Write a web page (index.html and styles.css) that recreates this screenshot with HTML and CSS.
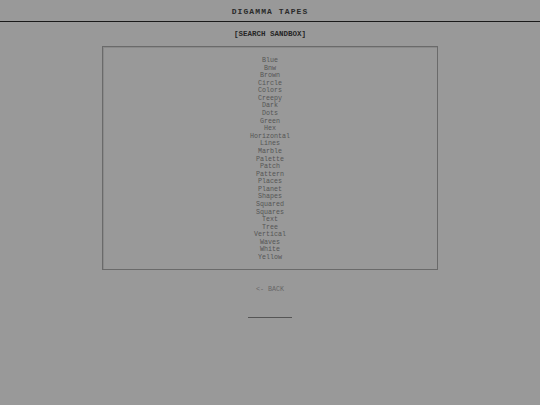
FILE: index.html
```html
<!DOCTYPE html>
<html>
<head>
<meta charset="utf-8">
<link rel="stylesheet" href="styles.css">
</head>
<body>
<header class="topbar"><span class="brand">DIGAMMA TAPES</span></header>
<main class="main">
  <h1 class="title">[SEARCH SANDBOX]</h1>
  <div class="box">
    <ul class="list">
      <li>Blue</li><li>Bnw</li><li>Brown</li><li>Circle</li><li>Colors</li><li>Creepy</li><li>Dark</li><li>Dots</li><li>Green</li><li>Hex</li><li>Horizontal</li><li>Lines</li><li>Marble</li><li>Palette</li><li>Patch</li><li>Pattern</li><li>Places</li><li>Planet</li><li>Shapes</li><li>Squared</li><li>Squares</li><li>Text</li><li>Tree</li><li>Vertical</li><li>Waves</li><li>White</li><li>Yellow</li>
    </ul>
  </div>
  <a class="back" href="#">&lt;- BACK</a>
  <div class="rule"></div>
</main>
</body>
</html>
```
FILE: styles.css
```css
html, body {
  margin: 0;
  padding: 0;
  background: #999999;
  font-family: "Nimbus Mono PS", "Nimbus Mono L", "Courier", "Liberation Mono", monospace;
}
.topbar {
  height: 21px;
  border-bottom: 1px solid #1a1a1a;
  display: flex;
  align-items: center;
  justify-content: center;
}
.brand {
  font-size: 8px;
  font-weight: bold;
  letter-spacing: 1.1px;
  color: #2a2a2a;
  padding-top: 1px;
}
.main {
  display: flex;
  flex-direction: column;
  align-items: center;
}
.title {
  margin: 8px 0 0;
  height: 16px;
  line-height: 8px;
  font-size: 7.5px;
  font-weight: bold;
  color: #262626;
}
.box {
  width: 334px;
  height: 222px;
  border: 1px solid #6a6a6a;
  box-shadow: inset 1px 1px 0 #8a8a8a;
  box-sizing: content-box;
}
.list {
  list-style: none;
  margin: 0;
  padding: 10px 0 0;
  text-align: center;
  font-size: 6.67px;
  line-height: 7.58px;
  color: #555555;
}
.back {
  margin-top: 15px;
  font-size: 6.67px;
  color: #666666;
  text-decoration: none;
  line-height: 8px;
}
.rule {
  margin-top: 24px;
  width: 44px;
  height: 1px;
  background: #555555;
}
```
